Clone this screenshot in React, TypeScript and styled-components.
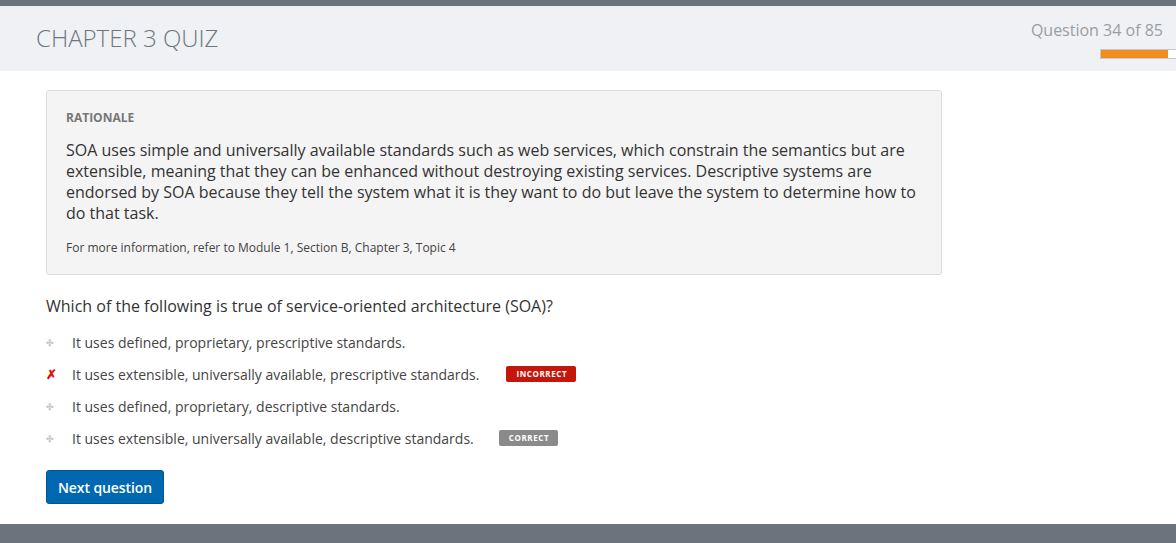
import React from "react";
import styled, { createGlobalStyle } from "styled-components";

const Global = createGlobalStyle`
  html, body { margin: 0; padding: 0; background: #fff; }
  body { font-family: "Open Sans", "Liberation Sans", sans-serif; color: #333; }
`;

const Page = styled.div`
  height: 543px;
  display: flex;
  flex-direction: column;
  border-top: 6px solid #6b737c;
  box-sizing: border-box;
  overflow: hidden;
`;

const Header = styled.header`
  height: 65px;
  flex: none;
  background: #f0f1f4;
  display: flex;
  justify-content: space-between;
  align-items: flex-start;
  padding-left: 36px;
`;

const Title = styled.h1`
  margin: 15px 0 0;
  font-size: 24px;
  font-weight: 300;
  color: #6d7780;
`;

const Progress = styled.div`
  display: flex;
  flex-direction: column;
  align-items: flex-end;
  padding-top: 13px;
`;

const Counter = styled.div`
  font-size: 16px;
  color: #9a9ea3;
  margin-right: 13px;
  line-height: 22px;
`;

const Track = styled.div`
  margin-top: 8px;
  width: 75px;
  height: 8px;
  background: #fff;
  border: 1px solid #c9c9c9;
  border-right: none;
`;

const Fill = styled.div`
  height: 100%;
  background: #f28c1e;
`;

const Main = styled.main`
  flex: 1;
  padding: 19px 46px 0;
  width: 896px;
`;

const Rationale = styled.section`
  background: #f4f4f4;
  border: 1px solid #dcdcdc;
  border-radius: 3px;
  padding: 18px 19px 18px;
`;

const Label = styled.div`
  font-size: 12px;
  font-weight: 700;
  color: #777;
  margin-bottom: 14px;
`;

const Body = styled.p`
  margin: 0;
  font-size: 16px;
  line-height: 21px;
  color: #333;
`;

const More = styled.p`
  margin: 15px 0 0;
  font-size: 12px;
  color: #444;
`;

const Question = styled.p`
  margin: 20px 0 9px;
  font-size: 16px;
  color: #333;
`;

const Options = styled.ul`
  list-style: none;
  margin: 0;
  padding: 0;
`;

const Option = styled.li`
  display: flex;
  align-items: center;
  height: 32px;
  font-size: 14px;
  color: #444;
`;

const Marker = styled.span<{ $wrong?: boolean }>`
  width: 26px;
  flex: none;
  display: flex;
  align-items: center;
  color: ${(p) => (p.$wrong ? "#e0100f" : "#c4c4c4")};
  font-size: ${(p) => (p.$wrong ? "13px" : "9px")};
  font-weight: 700;
`;

const Badge = styled.span<{ $kind: "correct" | "incorrect" }>`
  margin-left: ${(p) => (p.$kind === "incorrect" ? "27px" : "25px")};
  background: ${(p) => (p.$kind === "incorrect" ? "#c4160a" : "#8a8a8a")};
  color: #fff;
  font-size: 8px;
  font-weight: 700;
  letter-spacing: 0.6px;
  line-height: 16px;
  padding: 0 9px 0 10px;
  border-radius: 2px;
`;

const Button = styled.button`
  margin-top: 16px;
  background: #0068b0;
  color: #fff;
  border: 1px solid #005593;
  border-radius: 3px;
  font-family: inherit;
  font-size: 14px;
  font-weight: 600;
  height: 34px;
  padding: 0 11px;
  letter-spacing: -0.1px;
  cursor: pointer;
`;

const Footer = styled.footer`
  height: 19px;
  flex: none;
  background: #6b737c;
`;

const options: { text: string; wrong?: boolean; badge?: "correct" | "incorrect" }[] = [
  { text: "It uses defined, proprietary, prescriptive standards." },
  { text: "It uses extensible, universally available, prescriptive standards.", wrong: true, badge: "incorrect" },
  { text: "It uses defined, proprietary, descriptive standards." },
  { text: "It uses extensible, universally available, descriptive standards.", badge: "correct" },
];

export default function App() {
  return (
    <>
      <Global />
      <Page>
        <Header>
          <Title>CHAPTER 3 QUIZ</Title>
          <Progress>
            <Counter>Question 34 of 85</Counter>
            <Track>
              <Fill style={{ width: "89%" }} />
            </Track>
          </Progress>
        </Header>
        <Main>
          <Rationale>
            <Label>RATIONALE</Label>
            <Body>
              SOA uses simple and universally available standards such as web services, which constrain the semantics but are
              extensible, meaning that they can be enhanced without destroying existing services. Descriptive systems are
              endorsed by SOA because they tell the system what it is they want to do but leave the system to determine how to
              do that task.
            </Body>
            <More>For more information, refer to Module 1, Section B, Chapter 3, Topic 4</More>
          </Rationale>
          <Question>Which of the following is true of service-oriented architecture (SOA)?</Question>
          <Options>
            {options.map((o) => (
              <Option key={o.text}>
                <Marker $wrong={o.wrong}>{o.wrong ? "✗" : "✣"}</Marker>
                {o.text}
                {o.badge && <Badge $kind={o.badge}>{o.badge.toUpperCase()}</Badge>}
              </Option>
            ))}
          </Options>
          <Button>Next question</Button>
        </Main>
        <Footer />
      </Page>
    </>
  );
}
